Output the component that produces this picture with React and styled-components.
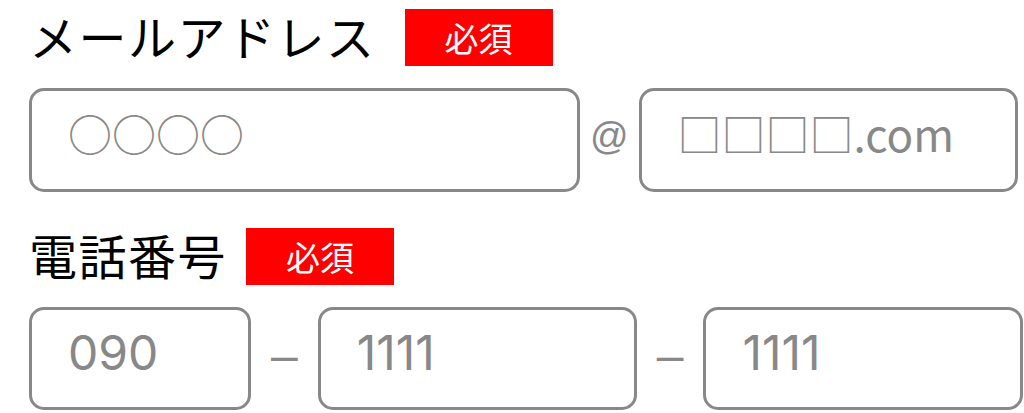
import React from "react"
import styled, { createGlobalStyle } from "styled-components"

const GlobalStyle = createGlobalStyle`
  html, body {
    margin: 0;
    padding: 0;
    background: #fff;
  }
  body {
    font-family: "Noto Sans CJK JP", "Noto Sans", sans-serif;
  }
`

const Form = styled.form`
  display: flex;
  flex-direction: column;
  gap: 36px;
  padding: 9px 0 0 29px;
`

const Field = styled.div`
  display: flex;
  flex-direction: column;
  gap: 22px;
`

const LabelRow = styled.div`
  display: flex;
  align-items: center;
  height: 57px;
`

const Label = styled.label`
  font-size: 48px;
  line-height: 1;
  letter-spacing: 1.5px;
  color: #000;
  margin-right: ${(p) => p.$space}px;
  padding-bottom: 6px;
`

const Badge = styled.span`
  display: flex;
  align-items: center;
  justify-content: center;
  width: 148px;
  height: 57px;
  background: #ff0000;
  color: #fff;
  font-size: 34px;
  line-height: 1;
`

const InputRow = styled.div`
  display: flex;
  align-items: center;
`

const TextBox = styled.input`
  box-sizing: border-box;
  width: ${(p) => p.$width}px;
  height: ${(p) => p.$height}px;
  border: 3px solid #888;
  border-radius: 15px;
  padding: 0 0 ${(p) => p.$lift}px 36px;
  background: #fff;
  font-family: ${(p) => (p.$digits ? '"Inter", "Liberation Sans"' : '"Noto Sans CJK JP"')}, sans-serif;
  font-size: ${(p) => p.$size}px;
  color: #333;
  outline: none;

  &::placeholder {
    color: #888;
    opacity: 1;
  }
`

const Separator = styled.span`
  font-family: "Liberation Sans", sans-serif;
  font-size: ${(p) => p.$size}px;
  line-height: 1;
  color: #888;
  margin: 0 ${(p) => p.$space}px;
  padding-bottom: ${(p) => p.$lift}px;
`

export default function App() {
  return (
    <>
      <GlobalStyle />
      <Form>
        <Field>
          <LabelRow>
            <Label $space={29}>メールアドレス</Label>
            <Badge>必須</Badge>
          </LabelRow>
          <InputRow>
            <TextBox $width={551} $height={104} $size={44} $lift={14} placeholder="○○○○" />
            <Separator $size={38} $space={10} $lift={8}>@</Separator>
            <TextBox $width={379} $height={104} $size={44} $lift={14} placeholder="□□□□.com" />
          </InputRow>
        </Field>
        <Field>
          <LabelRow>
            <Label $space={19}>電話番号</Label>
            <Badge>必須</Badge>
          </LabelRow>
          <InputRow>
            <TextBox $width={222} $height={103} $size={48} $lift={12} $digits placeholder="090" />
            <Separator $size={48} $space={20} $lift={6}>–</Separator>
            <TextBox $width={319} $height={103} $size={48} $lift={12} $digits placeholder="1111" />
            <Separator $size={48} $space={20} $lift={6}>–</Separator>
            <TextBox $width={320} $height={103} $size={48} $lift={12} $digits placeholder="1111" />
          </InputRow>
        </Field>
      </Form>
    </>
  )
}
